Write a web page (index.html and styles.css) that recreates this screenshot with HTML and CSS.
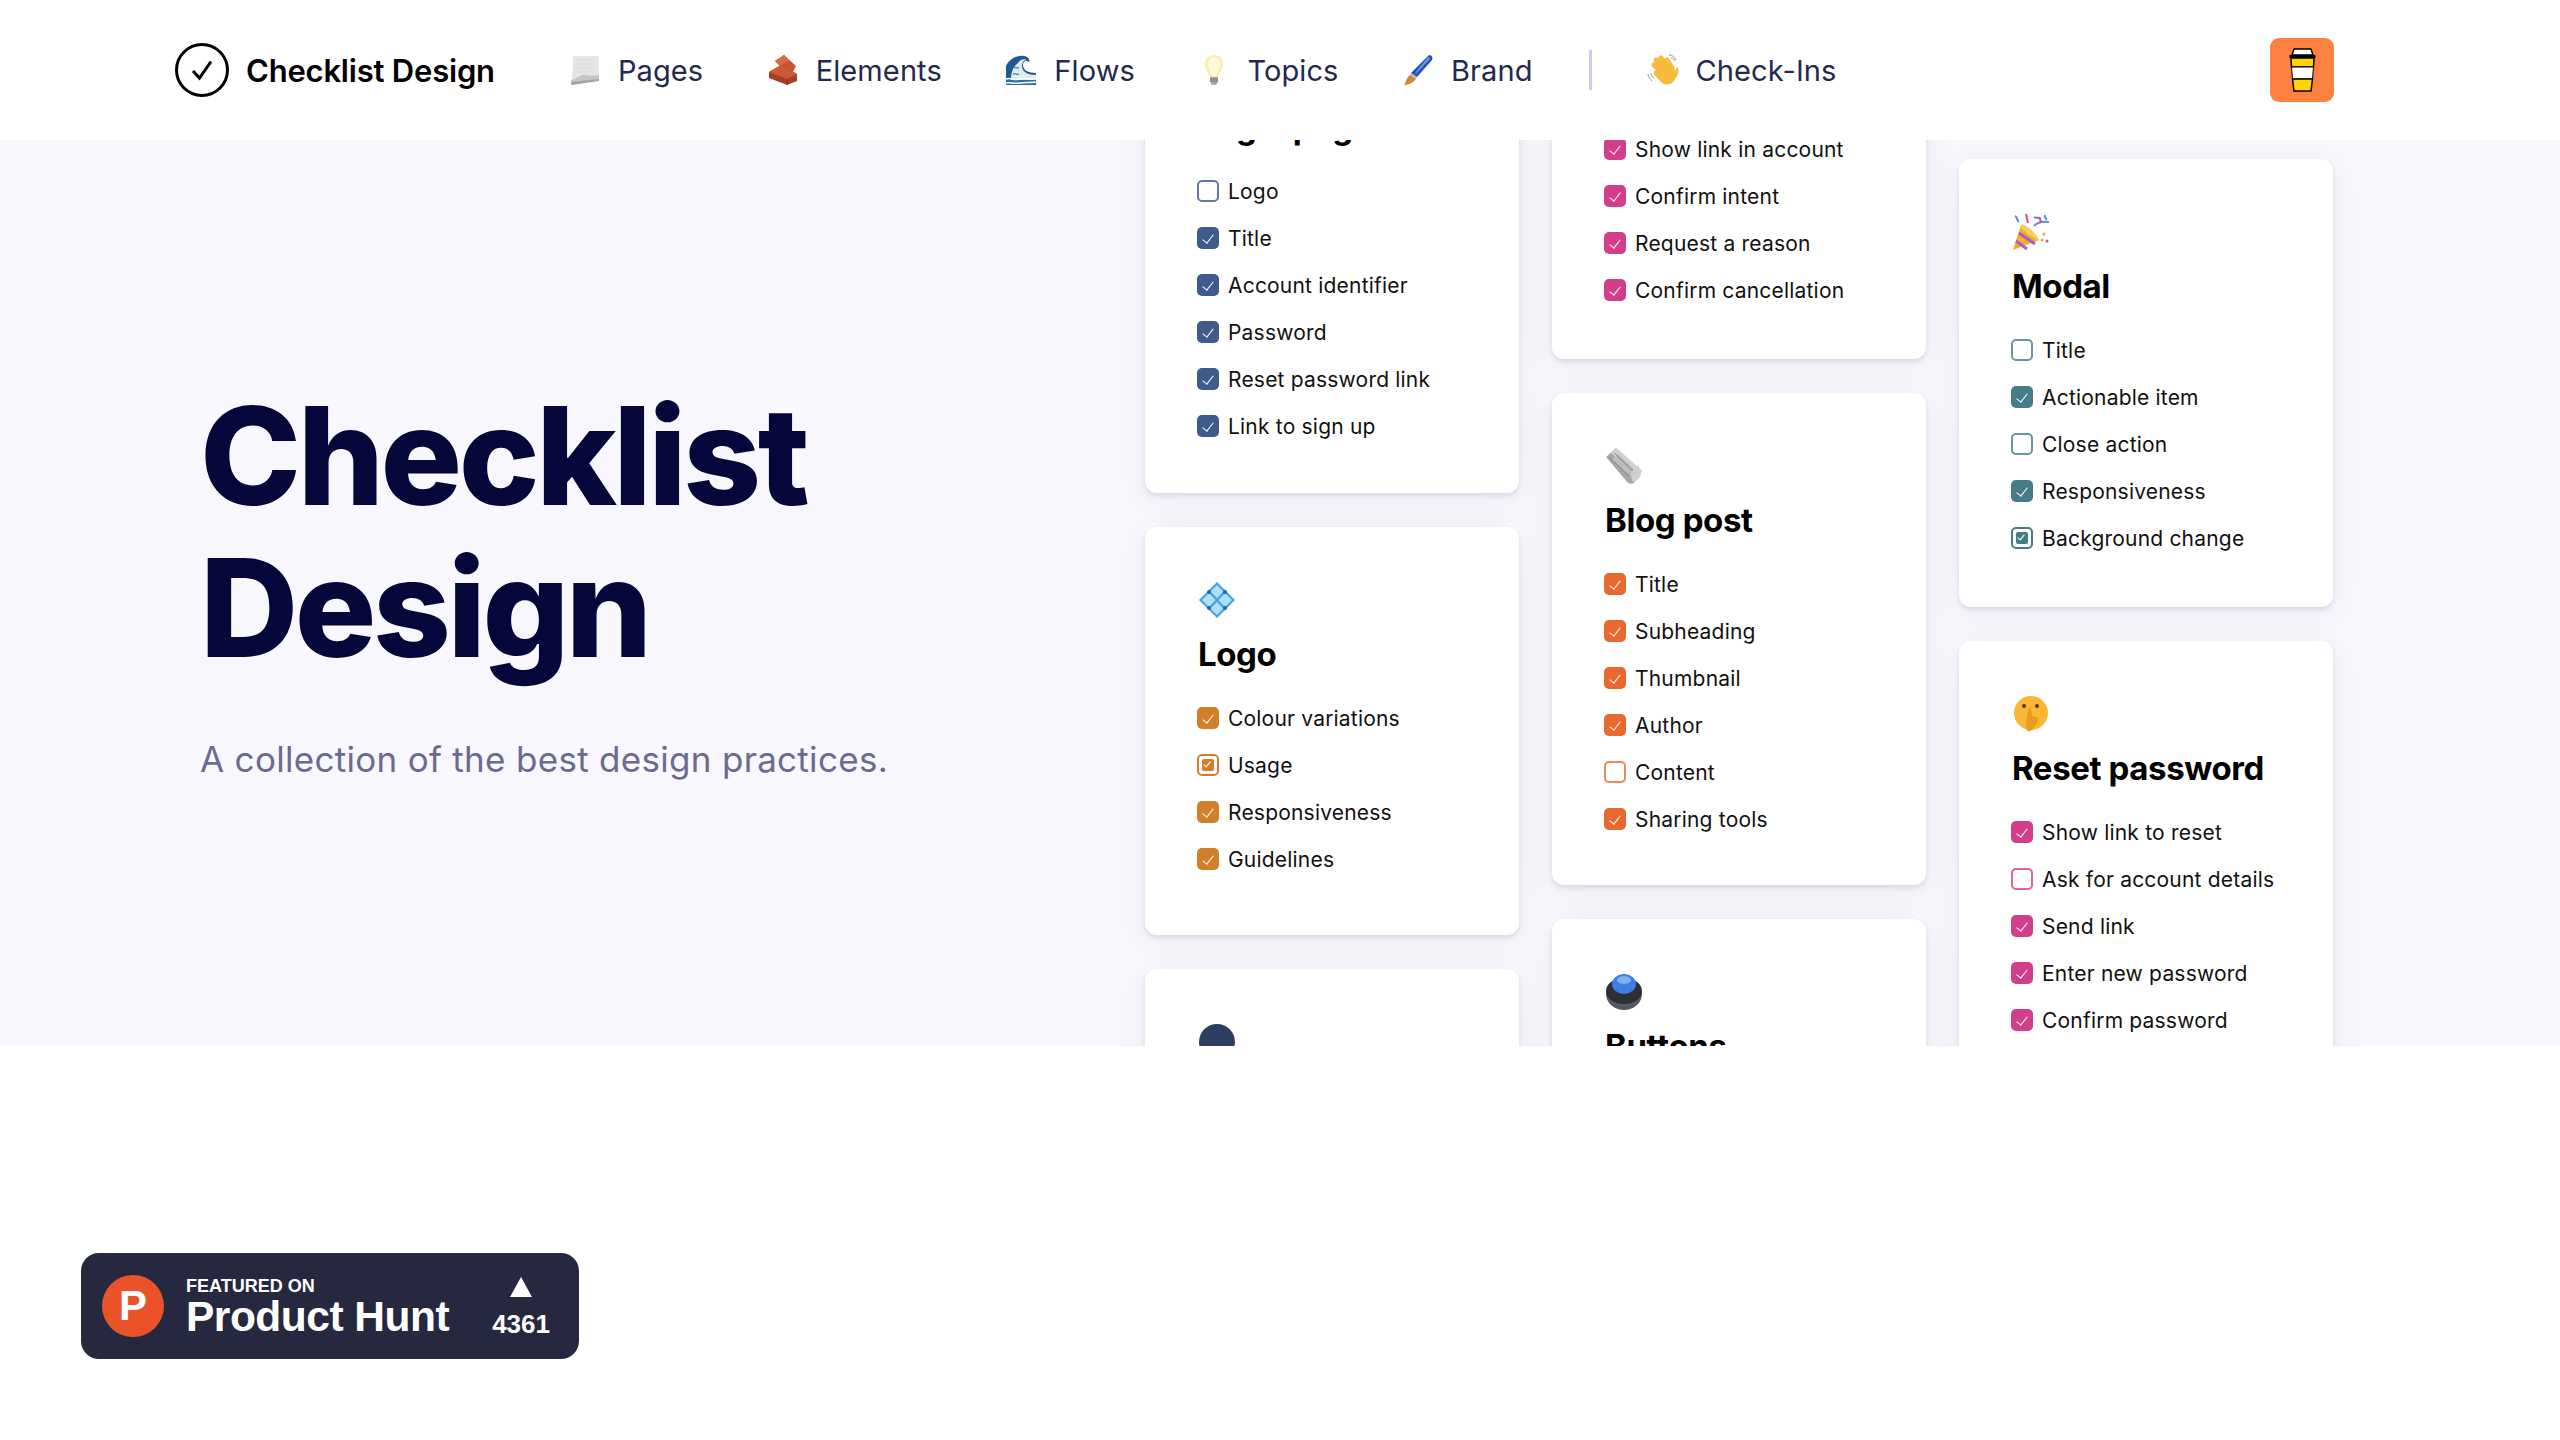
FILE: index.html
```html
<!DOCTYPE html>
<html lang="en">
<head>
    <meta charset="UTF-8">
    <meta name="viewport" content="width=device-width, initial-scale=1.0">
    <title>Checklist Design</title>
    <link rel="stylesheet" href="styles.css">
</head>
<body>
    <!-- header -->
    <header class="topbar">
        <a class="brand" href="#">
            <svg class="brand-mark" viewBox="0 0 54 54" fill="none" stroke="#000">
                <circle cx="27" cy="27" r="25.500" stroke-width="3"/>
                <path d="M18 28l6.500 7L36 18.500" stroke-width="3"/>
            </svg>
            <span>Checklist Design</span>
        </a>
        <nav class="nav">
            <a class="nav-link" href="#">
                <svg class="nav-icon" viewBox="0 0 32 32">
                    <path d="M4 2h26v23L3 28z" fill="#e6e6e4"/>
                    <path d="M8 6h18M8 10h18M8 14h18M8 18h12" stroke="#d8d8d6" stroke-width="1"/>
                    <path d="M2 26c6-1 9-6 15-5 5 1 8 1 13 0v5L2 30z" fill="#c6c6c4"/>
                    <path d="M2 28l28-3v2L3 31c-1 0-1-2-1-3z" fill="#a3a3a1"/>
                </svg>
                <span>Pages</span>
            </a>
            <a class="nav-link" href="#">
                <svg class="nav-icon" viewBox="0 0 32 32">
                    <path d="M8 7l9-6 12 11-4 8-6-2z" fill="#c9542f"/>
                    <path d="M8 7l9-6 5 5-9 6z" fill="#d96a43"/>
                    <path d="M2 18l12-7 16 9v7l-10 4L2 24z" fill="#a83f23"/>
                    <path d="M2 18l12-7 16 9-10 5z" fill="#c95a36"/>
                    <path d="M20 25v6" stroke="#7d2a16" stroke-width="1"/>
                </svg>
                <span>Elements</span>
            </a>
            <a class="nav-link" href="#">
                <svg class="nav-icon" viewBox="0 0 32 32">
                    <rect x="1" y="20" width="30" height="11" fill="#2b6ea6"/>
                    <path d="M1 31V12C4 5 12 1 19 2c5 1 6 4 5 6-3-2-6-1-6 3 0 5 5 8 13 8v5H1z" fill="#1f5a8e"/>
                    <path d="M6 26c0-8 2-13 7-17 1-2 5-5 9-3-3 0-5 2-5 6 0 6 6 9 14 9v5z" fill="#dcecf3"/>
                    <path d="M1 25c5-2 8 2 13 0s11 1 17-1M1 29c5-1 9 1 14 0s11 0 16-1" stroke="#fff" stroke-width="1.500" fill="none"/>
                    <path d="M8 20c2-1 4 1 6 0M9 14c2-1 3 0 5 0" stroke="#5d93bb" stroke-width="1.500" fill="none"/>
                </svg>
                <span>Flows</span>
            </a>
            <a class="nav-link" href="#">
                <svg class="nav-icon" viewBox="0 0 32 32">
                    <path d="M16 1c6 0 9 4 9 9 0 5-3 8-5 13h-8C10 18 7 15 7 10c0-5 3-9 9-9z" fill="#fbeea8"/>
                    <path d="M16 3c4 0 6 3 6 7s-3 8-4 12h-4c-1-4-4-8-4-12s2-7 6-7z" fill="#fff9dc"/>
                    <path d="M12 23h8v5l-2 3h-4l-2-3z" fill="#a9a69b"/>
                    <path d="M12 25h8M12 27h8" stroke="#7e7b71" stroke-width="1"/>
                </svg>
                <span>Topics</span>
            </a>
            <a class="nav-link" href="#">
                <svg class="nav-icon" viewBox="0 0 32 32">
                    <path d="M27 1c3 0 4 3 3 5L15 23l-6-4z" fill="#2550b0"/>
                    <path d="M26 3c1 0 2 1 2 2L14 20l-1-1z" fill="#6d92e2"/>
                    <path d="M9 19l6 4-1 2-6-4z" fill="#bdbdbd"/>
                    <path d="M8 21l6 4c-2 3-7 6-12 6 2-2 2-7 6-10z" fill="#d08a35"/>
                </svg>
                <span>Brand</span>
            </a>
            <span class="nav-sep"></span>
            <a class="nav-link" href="#">
                <svg class="nav-icon" viewBox="0 0 32 32">
                    <g stroke="#f7bb3c" stroke-width="5" stroke-linecap="round" fill="none">
                        <path d="M17 20L7 11M19 17L9 6M22 15L14 4M25 14l-5-8"/>
                        <path d="M14 24L9 19"/>
                    </g>
                    <ellipse cx="20" cy="21" rx="9" ry="9.500" fill="#f7bb3c"/>
                    <path d="M27 20c1-4 2-6 4-7 1 5 0 8-2 11z" fill="#f7bb3c"/>
                    <path d="M1 20c0 3 2 5 4 7M4 19c0 2 1 4 3 5M22 1c3 0 6 2 7 5M24 4c2 0 3 1 4 3" stroke="#9a9a9a" stroke-width="1" fill="none"/>
                </svg>
                <span>Check-Ins</span>
            </a>
        </nav>
        <a class="coffee" href="#">
            <svg viewBox="0 0 27 44" width="27" height="44">
                <path d="M5 1h17l2 6H3z" fill="#fff" stroke="#000" stroke-width="1.500"/>
                <rect x="0.500" y="7" width="26" height="3" fill="#000"/>
                <path d="M2 10h23l-.5 9h-22z" fill="#ffd400" stroke="#000" stroke-width="1.500"/>
                <path d="M2.500 19h22l-1 12h-20z" fill="#fff" stroke="#000" stroke-width="1"/>
                <path d="M3.500 31h20l-1.500 12H5z" fill="#ffd400" stroke="#000" stroke-width="1.500"/>
            </svg>
        </a>
    </header>

    <!-- hero -->
    <section class="hero">
        <div class="hero-text">
            <h1>Checklist<br>Design</h1>
            <p>A collection of the best design practices.</p>
        </div>

        <div class="boards">
            <div class="board board-one">
                <article class="card card-navy card-first">
                    <div class="card-icon"></div>
                    <h3>Login page</h3>
                    <ul>
                        <li><i class="box empty"></i>Logo</li>
                        <li><i class="box"></i>Title</li>
                        <li><i class="box"></i>Account identifier</li>
                        <li><i class="box"></i>Password</li>
                        <li><i class="box"></i>Reset password link</li>
                        <li><i class="box"></i>Link to sign up</li>
                    </ul>
                </article>
                <article class="card card-amber card-tall">
                    <svg class="card-icon" viewBox="0 0 36 36">
                        <path d="M18 0l18 18-18 18L0 18z" fill="#4c9fe0"/>
                        <path d="M18 3l6.500 6.500L18 16l-6.500-6.500zM26 11l7 7-7 7-6.500-7zM10 11l6.500 7L10 25l-7-7zM18 20l6.500 6.500L18 33l-6.500-6.500z" fill="#a9e2f6"/>
                        <circle cx="10" cy="10" r="2" fill="#2f62b8"/><circle cx="26" cy="10" r="2" fill="#2f62b8"/>
                        <circle cx="10" cy="26" r="2" fill="#2f62b8"/><circle cx="26" cy="26" r="2" fill="#2f62b8"/>
                    </svg>
                    <h3>Logo</h3>
                    <ul>
                        <li><i class="box"></i>Colour variations</li>
                        <li><i class="box part"></i>Usage</li>
                        <li><i class="box"></i>Responsiveness</li>
                        <li><i class="box"></i>Guidelines</li>
                    </ul>
                </article>
                <article class="card">
                    <svg class="card-icon" viewBox="0 0 36 36">
                        <circle cx="18" cy="18" r="18" fill="#2b3f5f"/>
                    </svg>
                </article>
            </div>

            <div class="board board-two">
                <article class="card card-pink card-mid">
                    <div class="card-icon"></div>
                    <h3>Cancel account</h3>
                    <ul>
                        <li><i class="box"></i>Show link in account</li>
                        <li><i class="box"></i>Confirm intent</li>
                        <li><i class="box"></i>Request a reason</li>
                        <li><i class="box"></i>Confirm cancellation</li>
                    </ul>
                </article>
                <article class="card card-orange">
                    <svg class="card-icon" viewBox="0 0 36 36">
                        <path d="M0 9L10 0l26 23-8 12c-2 1-4 1-6 0z" fill="#a8a8a8"/>
                        <path d="M10 0L5 5l25 24 6-6z" fill="#d2d2d2"/>
                        <path d="M6 12l6-6 16 15-6 6z" fill="#bcbcbc"/>
                        <path d="M24 26l8-9 3 6c1 4-3 10-8 11z" fill="#cfcfcf"/>
                        <path d="M3 9l20 19M8 5l19 18" stroke="#808080" stroke-width="1"/>
                    </svg>
                    <h3>Blog post</h3>
                    <ul>
                        <li><i class="box"></i>Title</li>
                        <li><i class="box"></i>Subheading</li>
                        <li><i class="box"></i>Thumbnail</li>
                        <li><i class="box"></i>Author</li>
                        <li><i class="box empty"></i>Content</li>
                        <li><i class="box"></i>Sharing tools</li>
                    </ul>
                </article>
                <article class="card">
                    <svg class="card-icon" viewBox="0 0 36 36">
                        <ellipse cx="18" cy="20" rx="18" ry="16" fill="#55585d"/>
                        <ellipse cx="18" cy="17" rx="18" ry="13" fill="#2e3035"/>
                        <ellipse cx="18" cy="10" rx="12" ry="10" fill="#3f7de0"/>
                        <ellipse cx="18" cy="6" rx="7" ry="4" fill="#7fb0f2"/>
                    </svg>
                    <h3>Buttons</h3>
                </article>
            </div>

            <div class="board board-three">
                <article class="card card-teal card-mid">
                    <svg class="card-icon" viewBox="0 0 36 36">
                        <path d="M0 36l8-25 18 15z" fill="#eeb02e"/>
                        <path d="M3 27l11 8M6 19l16 11" stroke="#b05bc4" stroke-width="3"/>
                        <path d="M8 11c3-3 16 9 18 15-5-1-20-11-18-15z" fill="#f7cf5f"/>
                        <path d="M21 12c3-4 8-5 15-4M2 2c3 1 1 4 4 6M21 3c2 2 4-1 5 2M32 1c-1 3 2 3 1 5" stroke="#5b8ce0" stroke-width="2" fill="none"/>
                        <path d="M13 0l2 9M27 3c-1 3 2 3 0 6" stroke="#e0457b" stroke-width="2" fill="none"/>
                        <circle cx="31" cy="20" r="1.500" fill="#e8a93a"/><circle cx="34" cy="27" r="1.500" fill="#e0457b"/><circle cx="29" cy="26" r="1.500" fill="#e8a93a"/>
                    </svg>
                    <h3>Modal</h3>
                    <ul>
                        <li><i class="box empty"></i>Title</li>
                        <li><i class="box"></i>Actionable item</li>
                        <li><i class="box empty"></i>Close action</li>
                        <li><i class="box"></i>Responsiveness</li>
                        <li><i class="box part"></i>Background change</li>
                    </ul>
                </article>
                <article class="card card-pink">
                    <svg class="card-icon" viewBox="0 0 36 36">
                        <circle cx="18" cy="17" r="17" fill="#f9b732"/>
                        <circle cx="11" cy="10" r="2" fill="#5b3a12"/><circle cx="24" cy="10" r="2" fill="#5b3a12"/>
                        <path d="M14 35c-1-4-1-8 0-13 0-4 1-8 2-10 1-1 2 0 2 1l1 8c3-1 5 0 6 2-1 5-4 10-8 12z" fill="#ee9a22"/>
                    </svg>
                    <h3>Reset password</h3>
                    <ul>
                        <li><i class="box"></i>Show link to reset</li>
                        <li><i class="box empty"></i>Ask for account details</li>
                        <li><i class="box"></i>Send link</li>
                        <li><i class="box"></i>Enter new password</li>
                        <li><i class="box"></i>Confirm password</li>
                    </ul>
                </article>
            </div>
        </div>
    </section>

    <!-- product hunt badge -->
    <div class="badge-row">
        <a class="ph-badge" href="#">
            <span class="ph-logo">P</span>
            <span class="ph-text">
                <small>FEATURED ON</small>
                <strong>Product Hunt</strong>
            </span>
            <span class="ph-votes">
                <i class="ph-arrow"></i>
                <span>4361</span>
            </span>
        </a>
    </div>
</body>
</html>
```

FILE: styles.css
```css
body {
    margin: 0;
    background: #ffffff;
    font-family: "Inter", "Liberation Sans", sans-serif;
    color: #000000;
}

a {
    color: inherit;
    text-decoration: none;
}

/* header */
.topbar {
    display: flex;
    align-items: center;
    height: 140px;
    padding: 0 226px 0 175px;
    background: #ffffff;
}

.brand {
    display: flex;
    align-items: center;
    gap: 17px;
    font-size: 31px;
    font-weight: 600;
    letter-spacing: -0.2px;
}

.brand-mark {
    width: 54px;
    height: 54px;
}

.nav {
    display: flex;
    align-items: center;
    gap: 63.500px;
    margin-left: 74px;
    flex: 1;
}

.nav-link {
    display: flex;
    align-items: center;
    gap: 17px;
    font-size: 29px;
    letter-spacing: 0.1px;
    color: #23284f;
}

.nav-icon {
    width: 32px;
    height: 32px;
}

.nav-sep {
    width: 3px;
    height: 40px;
    background: #cfcbf3;
    margin: 0 -9px 0 -7px;
}

.coffee {
    display: flex;
    align-items: center;
    justify-content: center;
    width: 64px;
    height: 64px;
    border-radius: 9px;
    background: #ff813f;
}

/* hero */
.hero {
    display: flex;
    height: 906px;
    overflow: hidden;
    background: #f8f7fd;
}

.hero-text {
    flex: none;
    width: 1145px;
    padding: 240px 0 0 200px;
    box-sizing: border-box;
}

.hero-text h1 {
    margin: 0;
    font-size: 136px;
    line-height: 152px;
    font-weight: 800;
    letter-spacing: -3.500px;
    color: #05063a;
}

.hero-text p {
    margin: 54px 0 0;
    font-size: 35px;
    letter-spacing: 0.3px;
    color: #6b6b8f;
}

.boards {
    display: flex;
    gap: 33px;
}

.board {
    display: flex;
    flex-direction: column;
    gap: 34px;
    width: 374px;
}

.board-one {
    margin-top: -140px;
}

.board-two {
    margin-top: -182px;
}

.board-three {
    margin-top: 19px;
}

/* cards */
.card {
    flex: none;
    padding: 55px 40px 54px 52px;
    border-radius: 12px;
    background: #ffffff;
    box-shadow: 0 3px 5px rgba(40, 40, 80, 0.12), 0 6px 40px rgba(40, 40, 80, 0.05);
}

.card-first {
    padding-bottom: 55px;
}

.card-tall {
    padding-bottom: 64px;
}

.card-mid {
    padding-bottom: 57px;
}

.card-icon {
    display: block;
    width: 36px;
    height: 36px;
    margin-left: 2px;
}

.card h3 {
    margin: 16px 0 0 1px;
    font-size: 33px;
    line-height: 40px;
    font-weight: 700;
    letter-spacing: -0.4px;
}

.card ul {
    display: flex;
    flex-direction: column;
    gap: 23px;
    list-style: none;
    margin: 32px 0 0;
    padding: 0;
}

.card li {
    display: flex;
    align-items: center;
    gap: 9px;
    height: 24px;
    font-size: 21px;
    letter-spacing: 0.2px;
    color: #111111;
}

.card-navy { --tick: #3f5a8c; }
.card-amber { --tick: #d17f2a; }
.card-pink { --tick: #d13f8b; }
.card-orange { --tick: #e9682f; }
.card-teal { --tick: #477c87; }

/* checkboxes */
.box {
    position: relative;
    flex: none;
    width: 22px;
    height: 22px;
    box-sizing: border-box;
    border-radius: 5px;
    background: var(--tick);
}

.box::after {
    content: "";
    position: absolute;
    left: 8px;
    top: 5px;
    width: 5px;
    height: 10px;
    border: solid #ffffff;
    border-width: 0 1.500px 1.500px 0;
    transform: rotate(38deg);
}

.box.empty {
    background: #ffffff;
    border: 2px solid var(--tick);
    opacity: 0.8;
}

.box.empty::after {
    display: none;
}

.box.part {
    background: #ffffff;
    border: 2px solid var(--tick);
}

.box.part::before {
    content: "";
    position: absolute;
    inset: 3px;
    border-radius: 2px;
    background: var(--tick);
}

.box.part::after {
    left: 6px;
    top: 4px;
    width: 3px;
    height: 6px;
    border-width: 0 1px 1px 0;
}

/* product hunt badge */
.badge-row {
    padding: 207px 0 81px 81px;
}

.ph-badge {
    display: flex;
    align-items: center;
    width: 498px;
    height: 106px;
    box-sizing: border-box;
    padding: 0 29px 0 21px;
    border-radius: 18px;
    background: #262840;
    color: #ffffff;
    font-family: "Liberation Sans", sans-serif;
}

.ph-logo {
    display: flex;
    align-items: center;
    justify-content: center;
    width: 62px;
    height: 62px;
    border-radius: 50%;
    background: #ea532a;
    font-size: 42px;
    font-weight: 700;
}

.ph-text {
    display: flex;
    flex-direction: column;
    flex: 1;
    margin: 4px 0 0 22px;
}

.ph-text small {
    font-size: 18px;
    line-height: 18px;
    font-weight: 700;
}

.ph-text strong {
    font-size: 42.500px;
    line-height: 44px;
    letter-spacing: -0.5px;
}

.ph-votes {
    display: flex;
    flex-direction: column;
    align-items: center;
    gap: 12px;
    margin-top: 4px;
    font-size: 26px;
    line-height: 30px;
    font-weight: 700;
}

.ph-arrow {
    width: 0;
    height: 0;
    border-left: 11px solid transparent;
    border-right: 11px solid transparent;
    border-bottom: 20px solid #ffffff;
}
```
